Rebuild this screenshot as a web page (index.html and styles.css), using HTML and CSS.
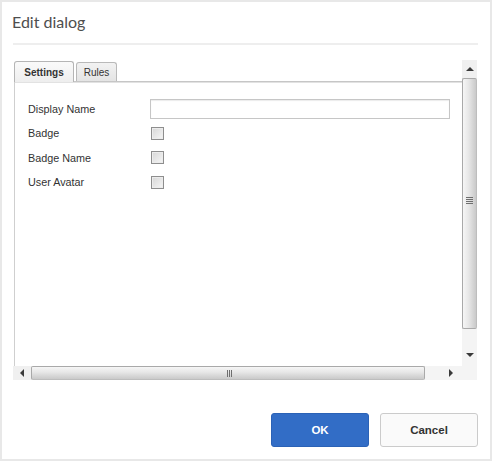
FILE: index.html
```html
<!DOCTYPE html>
<html>
<head>
<meta charset="utf-8">
<link rel="stylesheet" href="styles.css">
</head>
<body>
<div class="dialog">
  <div class="header"><h1 class="title">Edit dialog</h1></div>
  <div class="sep"></div>
  <div class="frame">
    <div class="main">
      <div class="tabs">
        <div class="tab active">Settings</div>
        <div class="tab">Rules</div>
      </div>
      <div class="panel">
        <div class="row"><span class="label">Display Name</span><span class="input"></span></div>
        <div class="row"><span class="label">Badge</span><span class="check"></span></div>
        <div class="row"><span class="label">Badge Name</span><span class="check"></span></div>
        <div class="row"><span class="label">User Avatar</span><span class="check"></span></div>
      </div>
    </div>
    <div class="vscroll">
      <div class="vbtn up"><span class="tri-up"></span></div>
      <div class="vthumb"><span class="grip-v"><i></i><i></i><i></i><i></i></span></div>
      <div class="vtrack"><span class="tri-down"></span></div>
    </div>
    <div class="hscroll">
      <div class="hbtn"><span class="tri-left"></span></div>
      <div class="hthumb"><span class="grip-h"><i></i><i></i><i></i></span></div>
      <div class="htrack"><span class="tri-right"></span></div>
    </div>
    <div class="corner"></div>
  </div>
  <div class="footer">
    <button class="btn primary">OK</button>
    <button class="btn secondary">Cancel</button>
  </div>
</div>
</body>
</html>
```

FILE: styles.css
```css
html, body {
  margin: 0;
  padding: 0;
  background: #ffffff;
}
body {
  font-family: "Liberation Sans", Arial, sans-serif;
  color: #333333;
}
.dialog {
  width: 492px;
  height: 461px;
  box-sizing: border-box;
  border: 2px solid #e8e8e8;
  display: flex;
  flex-direction: column;
  background: #fff;
}
.header {
  height: 41px;
  padding-left: 10px;
  display: flex;
  align-items: center;
}
.title {
  margin: 0;
  font-family: "Lato", "Open Sans", sans-serif;
  font-weight: 400;
  font-size: 16px;
  color: #4e4e4e;
  position: relative;
  top: -1px;
}
.sep {
  height: 2px;
  background: #eeeeee;
  margin: 0 12px 0 11px;
}
.frame {
  margin: 15px 13px 0 11px;
  height: 320px;
  display: grid;
  grid-template-columns: 1fr 15px;
  grid-template-rows: 306px 14px;
}
.main {
  display: flex;
  flex-direction: column;
  padding-top: 1px;
}
.tabs {
  display: flex;
  align-items: flex-end;
  gap: 2px;
  padding-left: 1px;
  height: 20px;
}
.tab {
  font-size: 10px;
  color: #333;
  border: 1px solid #b9b9b9;
  border-bottom: none;
  border-radius: 3px 3px 0 0;
  background: linear-gradient(#f2f2f2, #e4e4e4);
  height: 19px;
  width: 41px;
  justify-content: center;
  display: flex;
  align-items: center;
  box-sizing: border-box;
}
.tab.active {
  font-weight: bold;
  height: 21px;
  width: 60px;
  background: linear-gradient(#fafafa, #eeeeee);
  position: relative;
  top: 1px;
  border-color: #b5b5b5;
}
.panel {
  flex: 1;
  margin-left: 1px;
  border-top: 1px solid #c6c6c6;
  border-left: 1px solid #cfcfcf;
  box-shadow: inset 0 1px 0 #e2e2e2;
  padding: 16px 0 0 13px;
  display: flex;
  flex-direction: column;
  gap: 0;
}
.row {
  display: flex;
  align-items: center;
  height: 24.5px;
  font-size: 10.8px;
  color: #333;
}
.row:first-child {
  height: 22px;
  margin-bottom: 1px;
}
.label {
  width: 122px;
}
.input {
  width: 298px;
  height: 18px;
  border: 1px solid #c6c6c6;
  box-shadow: inset 0 1px 1px #ececec;
  background: #fff;
}
.check {
  width: 11px;
  height: 11px;
  margin-left: 1px;
  border: 1px solid #8e8e8e;
  background: linear-gradient(135deg, #d6d6d6, #f6f6f6);
  box-shadow: inset 0 0 0 1px #ececec;
}

/* vertical scrollbar */
.vscroll {
  display: flex;
  flex-direction: column;
  background: #f2f2f2;
}
.vbtn {
  height: 18px;
  display: flex;
  align-items: center;
  justify-content: center;
  background: #f0f0f0;
}
.tri-up {
  width: 0; height: 0;
  border-left: 4px solid transparent;
  border-right: 4px solid transparent;
  border-bottom: 4px solid #3a3a3a;
}
.tri-down {
  width: 0; height: 0;
  border-left: 4px solid transparent;
  border-right: 4px solid transparent;
  border-top: 4px solid #3a3a3a;
}
.tri-left {
  width: 0; height: 0;
  border-top: 4px solid transparent;
  border-bottom: 4px solid transparent;
  border-right: 4px solid #3a3a3a;
}
.tri-right {
  width: 0; height: 0;
  border-top: 4px solid transparent;
  border-bottom: 4px solid transparent;
  border-left: 4px solid #3a3a3a;
}
.vthumb {
  height: 251px;
  box-sizing: border-box;
  border: 1px solid #a9a9a9;
  border-right-color: #bdbdbd;
  border-radius: 2px;
  background: linear-gradient(to right, #f6f6f6 0%, #e6e6e6 45%, #c9c9c9 100%);
  display: flex;
  align-items: center;
  justify-content: center;
}
.grip-v {
  display: flex;
  flex-direction: column;
  gap: 1px;
  margin-top: -6px;
}
.grip-v i {
  display: block;
  width: 7px;
  height: 1px;
  background: #6e6e6e;
}
.vtrack {
  flex: 1;
  display: flex;
  align-items: flex-end;
  justify-content: center;
  padding-bottom: 9px;
  background: #f4f4f4;
}

/* horizontal scrollbar */
.hscroll {
  display: flex;
  background: #f2f2f2;
}
.hbtn {
  width: 18px;
  display: flex;
  align-items: center;
  justify-content: center;
  background: #f0f0f0;
}
.hthumb {
  width: 394px;
  box-sizing: border-box;
  border: 1px solid #a9a9a9;
  border-bottom-color: #bdbdbd;
  border-radius: 2px;
  background: linear-gradient(#f6f6f6 0%, #e6e6e6 45%, #c9c9c9 100%);
  display: flex;
  align-items: center;
  justify-content: center;
}
.grip-h {
  display: flex;
  gap: 1px;
  margin-left: 2px;
}
.grip-h i {
  display: block;
  width: 1px;
  height: 7px;
  background: #6e6e6e;
}
.htrack {
  flex: 1;
  display: flex;
  align-items: center;
  justify-content: flex-end;
  padding-right: 9px;
  background: #f4f4f4;
}
.corner {
  background: #f4f4f4;
}

/* footer */
.footer {
  flex: 1;
  display: flex;
  justify-content: flex-end;
  align-items: flex-start;
  gap: 11px;
  padding: 33px 12px 0 0;
}
.btn {
  height: 34px;
  border-radius: 3px;
  font-family: "Liberation Sans", Arial, sans-serif;
  font-weight: bold;
  font-size: 11.5px;
  cursor: pointer;
}
.btn.primary {
  width: 98px;
  background: #326dc6;
  border: 1px solid #2b62b6;
  color: #ffffff;
}
.btn.secondary {
  width: 98px;
  background: #fafafa;
  border: 1px solid #cbcbcb;
  color: #333333;
}
```
